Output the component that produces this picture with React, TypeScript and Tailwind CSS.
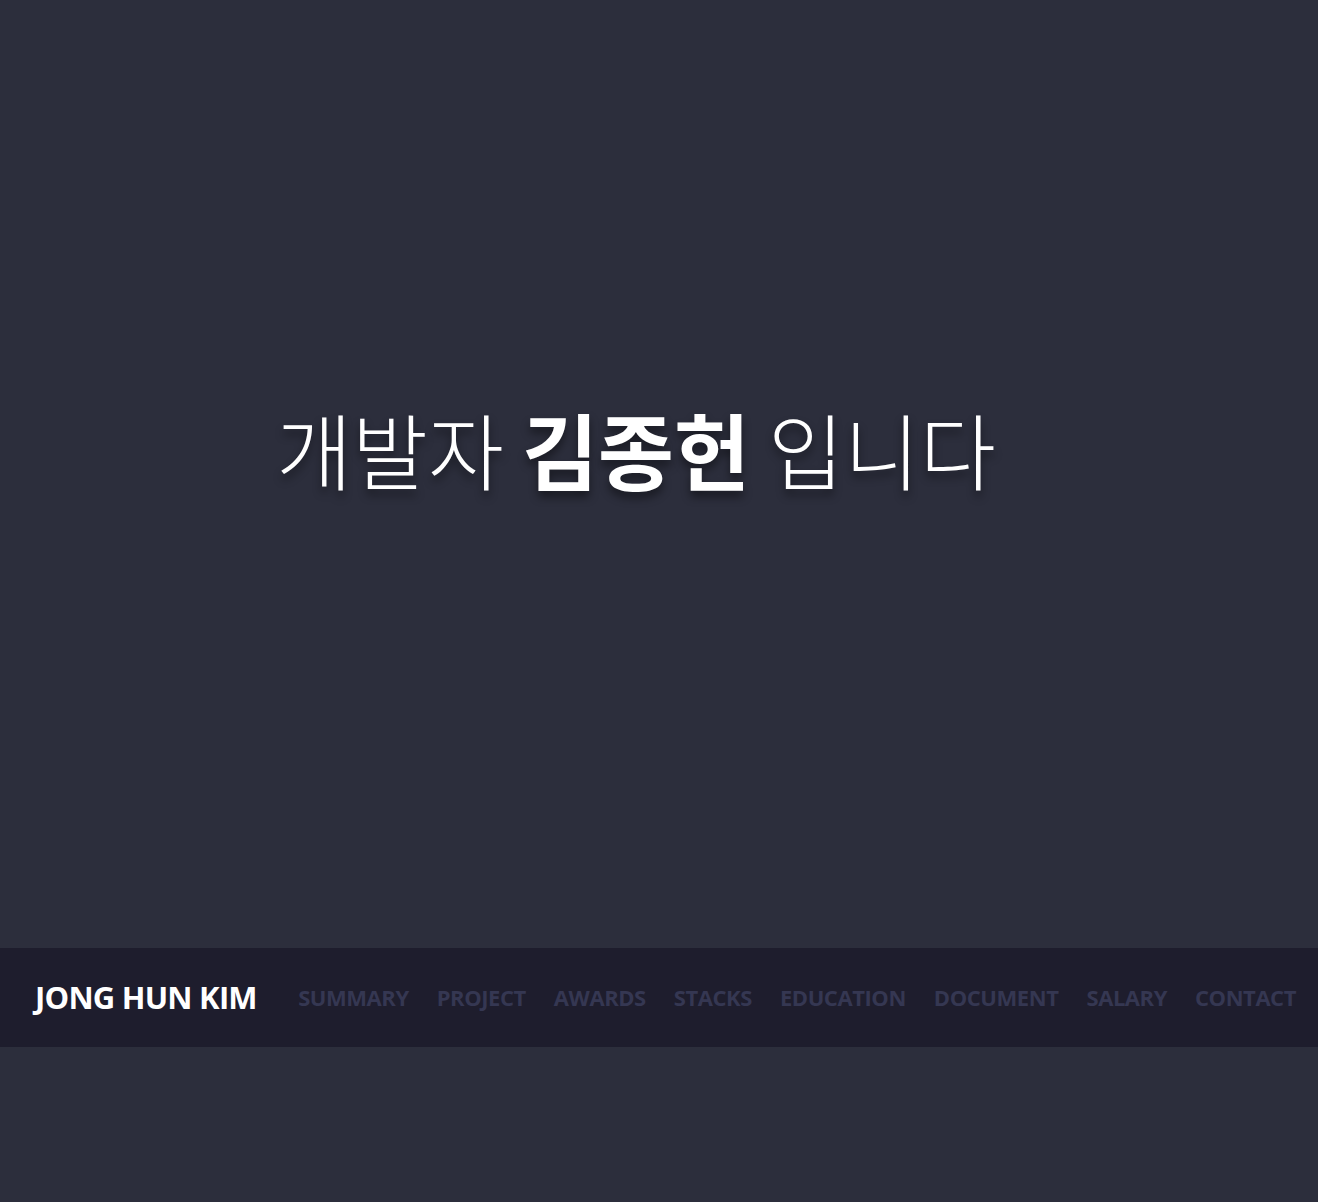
const navItems = ["SUMMARY", "PROJECT", "AWARDS", "STACKS", "EDUCATION", "DOCUMENT", "SALARY", "CONTACT"];

export default function App() {
  return (
    <div className="min-h-[1202px] bg-[#2c2e3c] font-['Open_Sans','Noto_Sans_CJK_KR',sans-serif]">
      {/* Hero */}
      <section className="h-[948px] flex items-center justify-center pb-[52px] pr-[46px]">
        <h1 className="text-[82.5px] leading-none text-white font-['Noto_Sans_CJK_KR',sans-serif] [text-shadow:0_6px_10px_rgba(0,0,0,0.45)]">
          <span className="font-light">개발자 </span>
          <span className="font-bold">김종헌</span>
          <span className="font-light"> 입니다</span>
        </h1>
      </section>

      {/* Nav */}
      <nav className="h-[99px] bg-[#1e1d2d] flex items-center justify-between pl-[35px] pr-[22px]">
        <span className="text-[31px] font-bold text-white tracking-tight">JONG HUN KIM</span>
        <ul className="flex items-center gap-[28px]">
          {navItems.map((item) => (
            <li key={item} className="text-[22px] font-bold text-[#353752] tracking-[-0.02em]">
              {item}
            </li>
          ))}
        </ul>
      </nav>
    </div>
  );
}
